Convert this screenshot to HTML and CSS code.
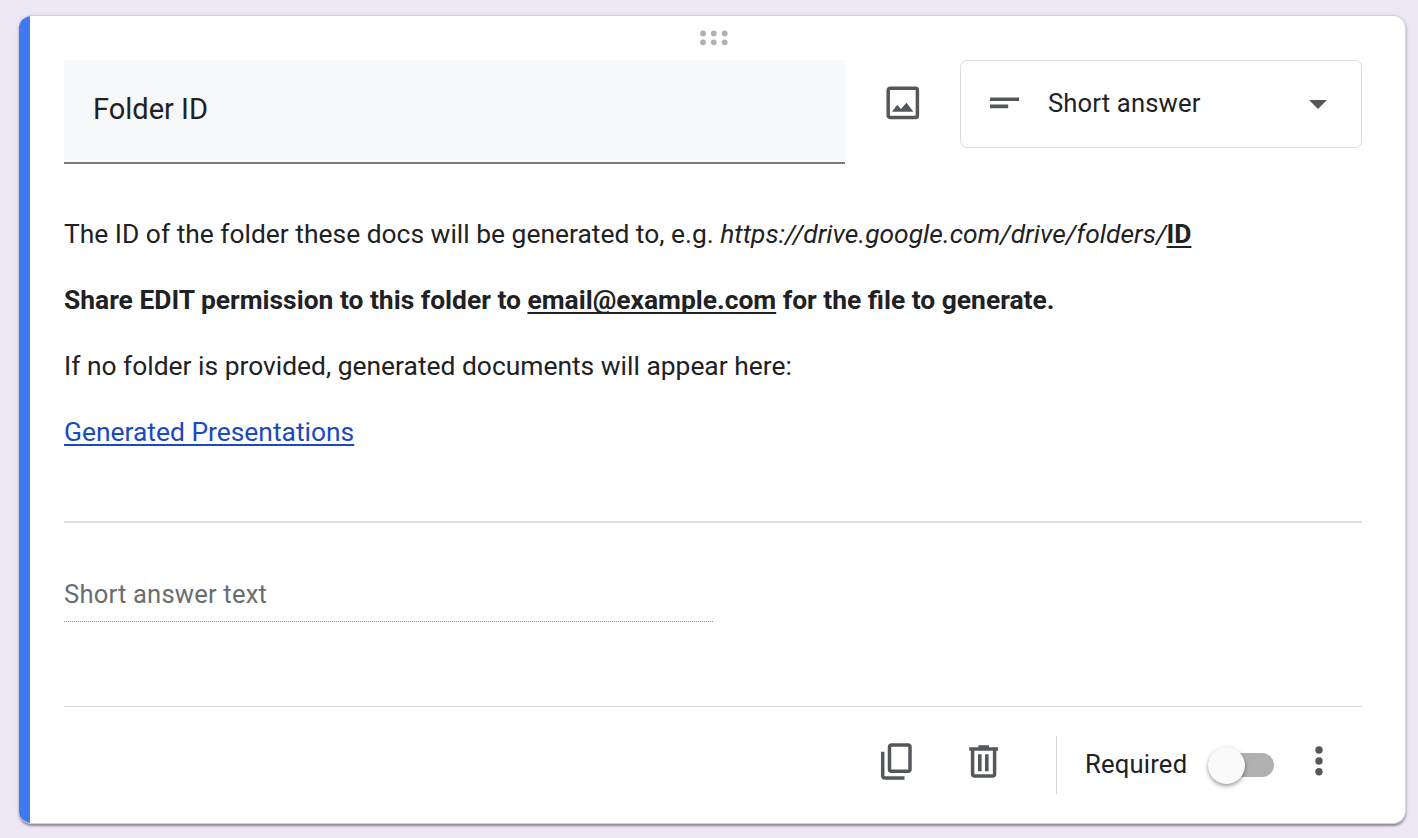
FILE: index.html
```html
<!DOCTYPE html>
<html lang="en">
<head>
<meta charset="utf-8">
<title>Form question</title>
<link rel="stylesheet" href="styles.css">
</head>
<body>
<main class="card">
  <div class="accent"></div>
  <div class="body">
    <div class="drag">
      <svg width="30" height="18" viewBox="0 0 30 18" fill="#b0b0b0"><circle cx="4" cy="4.400" r="2.900"/><circle cx="14.800" cy="4.400" r="2.900"/><circle cx="25.700" cy="4.400" r="2.900"/><circle cx="4" cy="13.300" r="2.900"/><circle cx="14.800" cy="13.300" r="2.900"/><circle cx="25.700" cy="13.300" r="2.900"/></svg>
    </div>
    <div class="top">
      <div class="title"><div class="title-text"><span>Folder ID</span></div></div>
      <svg class="image-icon" width="34" height="34" viewBox="0 0 34 34"><rect x="2.200" y="2.200" width="29.200" height="29.200" rx="2" fill="none" stroke="#54585d" stroke-width="3.500"/><path fill="#54585d" d="M6 25.700 11.200 18.700 14.900 23 20.500 16.700 27.400 25.700z"/></svg>
      <div class="select">
        <svg class="lines" width="30" height="12" viewBox="0 0 30 12" fill="#54585d"><path d="M0 .4h29v3.600H0zM0 7.600h18.200v3.600H0z"/></svg>
        <span class="select-text">Short answer</span>
        <svg width="18" height="9" viewBox="0 0 18 9" fill="#54585d"><path d="M0 0h18L9 9z"/></svg>
      </div>
    </div>
    <div class="description">
      <p>The ID of the folder these docs will be generated to, e.g. <i>https://drive.google.com/drive/folders/</i><b><u>ID</u></b></p>
      <p><b>Share EDIT permission to this folder to <u>email@example.com</u> for the file to generate.</b></p>
      <p>If no folder is provided, generated documents will appear here:</p>
      <p><a class="link">Generated Presentations</a></p>
    </div>
    <div class="answer"><span>Short answer text</span></div>
    <div class="footer">
      <svg class="copy" width="32" height="38" viewBox="0 0 32 38" fill="none" stroke="#54585d" stroke-width="3.500"><rect x="9.500" y="2" width="20.500" height="26.200" rx="2"/><path d="M2.700 8.700V32.500q0 2.500 2.500 2.500H24.500"/></svg>
      <svg class="trash" width="30" height="34" viewBox="0 0 30 34"><path fill="none" stroke="#54585d" stroke-width="3.500" d="M3.600 4v25q0 2 2 2h18q2 0 2-2V4"/><path fill="#54585d" d="M.2 2.200h9.200V.3h10.600v1.900h9v3.500H.2zM9 9.200h3.600v17H9zM16 9.200h3.600v17h-3.600z"/></svg>
      <div class="divider"></div>
      <span class="required">Required</span>
      <div class="toggle"><div class="knob"></div></div>
      <svg class="more" width="8" height="30" viewBox="0 0 8 30" fill="#54585d"><circle cx="4" cy="4" r="3.700"/><circle cx="4" cy="15" r="3.700"/><circle cx="4" cy="25.700" r="3.700"/></svg>
    </div>
  </div>
</main>
</body>
</html>
```
FILE: styles.css
```css
* { box-sizing: border-box; }
body {
  margin: 0;
  height: 838px;
  padding: 15px 12px 0 19px;
  overflow: hidden;
  background: #ede7f6;
  font-family: Roboto, sans-serif;
  font-size: 26.4px;
  color: #202124;
}
svg { display: block; flex: none; }
.card {
  display: flex;
  height: 809px;
  border-radius: 13px;
  overflow: hidden;
  background: #fff;
  border: solid #d5d0dc;
  border-width: 1px 1px 1px 0;
  box-shadow: 0 2px 2px rgba(0,0,0,.35), 0 1px 5px rgba(0,0,0,.12);
}
.accent { width: 11px; margin: -1px 0; background: #4079ed; }
.body { flex: 1; padding: 0 43px 0 34px; }
.drag { display: flex; justify-content: center; height: 44px; padding: 13px 0 0 1px; }
.top { display: flex; height: 104px; }
.title { width: 781px; border-bottom: 2px solid #777b80; padding-bottom: 2px; }
.title-text {
  height: 100px;
  padding: 0 29px 2px;
  display: flex;
  align-items: center;
  background: #f7f8fa;
  font-size: 29px;
}
.image-icon { margin: 26px 40px 0 41px; }
.select {
  flex: 1;
  height: 88px;
  display: flex;
  align-items: center;
  padding: 0 34px 0 29px;
  border: 1px solid #d9dadd;
  border-radius: 7px;
}
.lines { margin-top: -3px; }
.select-text { flex: 1; padding: 0 0 2px 28px; font-size: 25.6px; letter-spacing: .16px; }
.description { height: 359px; padding-top: 54px; border-bottom: 2px solid #e0e0e0; }
.description p { margin: 0 0 33px; line-height: 33px; white-space: nowrap; }
u, .link { text-decoration: underline; text-decoration-thickness: 2px; text-underline-offset: 3px; text-decoration-skip-ink: none; }
.link { color: #1a49c0; }
.answer {
  width: 649px;
  height: 99px;
  padding-top: 55px;
  border-bottom: 1px dotted #8f9296;
  font-size: 25.6px;
  line-height: 32px;
  letter-spacing: .18px;
  color: #686d72;
}
.footer {
  display: flex;
  align-items: center;
  height: 117px;
  margin-top: 84px;
  border-top: 1px solid #d7d8dd;
}
.copy { margin: -7px 0 0 816px; }
.trash { margin: -7px 0 0 57px; }
.divider { width: 1px; height: 58px; margin-left: 57px; background: #d7d8dd; }
.required { margin: -2px 0 0 28px; font-size: 25.6px; letter-spacing: .2px; }
.toggle { width: 65px; height: 24px; margin-left: 22px; border-radius: 12px; background: #b0b0b0; }
.knob { width: 37px; height: 37px; margin: -6px 0 0 -1px; border-radius: 50%; background: #fafafa; box-shadow: 0 2px 4px rgba(0,0,0,.4); }
.more { margin: -8px 0 0 40.5px; }
```
